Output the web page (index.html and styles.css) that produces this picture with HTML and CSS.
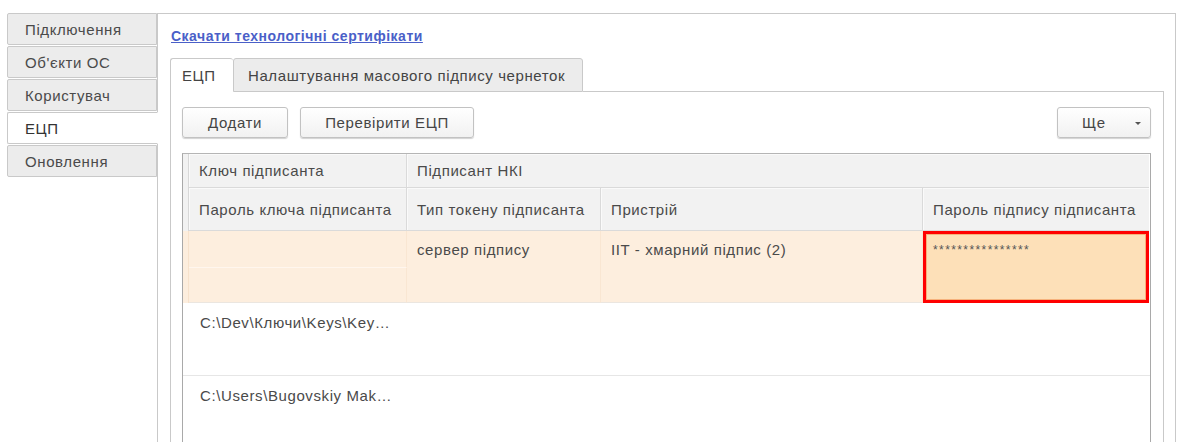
FILE: index.html
```html
<!DOCTYPE html>
<html lang="uk">
<head>
<meta charset="utf-8">
<title>ЕЦП</title>
<link rel="stylesheet" href="styles.css">
</head>
<body>
<div class="app">
  <nav class="sidebar">
    <div class="side-tab">Підключення</div>
    <div class="side-tab">Об'єкти ОС</div>
    <div class="side-tab">Користувач</div>
    <div class="side-tab active">ЕЦП</div>
    <div class="side-tab">Оновлення</div>
  </nav>
  <main class="main">
    <a class="link" href="#">Скачати технологічні сертифікати</a>
    <div class="tabs">
      <div class="tab active">ЕЦП</div>
      <div class="tab">Налаштування масового підпису чернеток</div>
      <div class="tab-fill"></div>
    </div>
    <div class="panel">
      <div class="toolbar">
        <button class="btn btn-add">Додати</button>
        <button class="btn btn-check">Перевірити ЕЦП</button>
        <button class="btn btn-more">Ще <span class="caret"></span></button>
      </div>
      <div class="table">
        <div class="grid">
          <div class="stripe h-stripe"></div>
          <div class="hc c1 r1">Ключ підписанта</div>
          <div class="hc c234 r1">Підписант НКІ</div>
          <div class="hc c1 r2">Пароль ключа підписанта</div>
          <div class="hc c2 r2">Тип токену підписанта</div>
          <div class="hc c3 r2">Пристрій</div>
          <div class="hc c4 r2 last">Пароль підпису підписанта</div>

          <div class="stripe d-stripe"></div>
          <div class="dc c1 r3 sub"></div>
          <div class="dc c1 r4"></div>
          <div class="dc c2 r34">сервер підпису</div>
          <div class="dc c3 r34">IIT - хмарний підпис (2)</div>
          <div class="dc c4 r34 pw"><span class="stars">****************</span></div>
        </div>
        <div class="row">C:\Dev\Ключи\Keys\Key…</div>
        <div class="row">C:\Users\Bugovskiy Mak…</div>
      </div>
    </div>
  </main>
</div>
</body>
</html>
```

FILE: styles.css
```css
html, body {
  margin: 0;
  background: #fff;
}
body {
  font-family: "Liberation Sans", Arial, sans-serif;
  font-size: 15px;
  letter-spacing: 0.6px;
  color: #464646;
  overflow: hidden;
  height: 442px;
}
.app {
  display: flex;
  padding: 13px 0 0 7px;
  height: 442px;
  box-sizing: border-box;
}
.sidebar {
  width: 150px;
  flex: none;
  display: flex;
  flex-direction: column;
  gap: 1px;
}
.side-tab {
  height: 32px;
  box-sizing: border-box;
  border: 1px solid #c9c9c9;
  border-radius: 2px 0 0 2px;
  background: #ececec;
  padding-left: 17px;
  display: flex;
  align-items: center;
  color: #4a4a4a;
}
.side-tab.active {
  background: #fff;
  border-right-color: #fff;
  margin-right: -1px;
  position: relative;
  z-index: 1;
  color: #333;
}
.main {
  flex: none;
  width: 1019px;
  box-sizing: border-box;
  border: 1px solid #c9c9c9;
  border-bottom: none;
  padding: 14px 11px 0 12px;
  display: flex;
  flex-direction: column;
}
.link {
  margin-left: 1px;
  font-size: 14px;
  font-weight: bold;
  letter-spacing: 0.5px;
  color: #4a5fc8;
  text-decoration: underline;
  line-height: 16px;
  align-self: flex-start;
}
.tabs {
  display: flex;
  margin-top: 14px;
  height: 34px;
}
.tab {
  box-sizing: border-box;
  height: 34px;
  border: 1px solid #c9c9c9;
  border-bottom: none;
  border-radius: 3px 3px 0 0;
  background: #ececec;
  display: flex;
  align-items: center;
  padding: 0 14px;
  color: #444;
  white-space: nowrap;
}
.tab.active {
  width: 63px;
  background: #fff;
  padding-left: 11px;
  border-right: none;
}
.tab:not(.active) {
  width: 350px;
  border-bottom: 1px solid #c9c9c9;
}
.tab-fill {
  flex: 1;
  border-bottom: 1px solid #c9c9c9;
}
.panel {
  flex: 1;
  border: 1px solid #c9c9c9;
  border-top: none;
  border-bottom: none;
  padding: 15px 12px 0 11px;
  display: flex;
  flex-direction: column;
}
.toolbar {
  display: flex;
  gap: 12px;
  height: 31px;
}
.btn {
  box-sizing: border-box;
  height: 31px;
  border: 1px solid #c2c2c2;
  border-radius: 3px;
  background: linear-gradient(#ffffff, #f1f1f1);
  box-shadow: 0 1px 1px rgba(0, 0, 0, 0.18);
  font-family: inherit;
  font-size: 15px;
  letter-spacing: 0.6px;
  color: #454545;
  padding: 0;
}
.btn-add { width: 106px; }
.btn-check { width: 174px; }
.btn-more {
  width: 94px;
  margin-left: auto;
  position: relative;
  text-align: left;
  padding-left: 24px;
}
.caret {
  position: absolute;
  right: 9px;
  top: 14px;
  width: 0;
  height: 0;
  border-left: 3px solid transparent;
  border-right: 3px solid transparent;
  border-top: 3px solid #555;
}
.table {
  margin-top: 15px;
  border-left: 1px solid #a9a9a9;
  border-right: 1px solid #a9a9a9;
  border-top: 1px solid #b5b5b5;
  flex: 1;
}
.grid {
  display: grid;
  grid-template-columns: 6px 218px 194px 322px 226px;
  grid-template-rows: 34px 43px 37px 35px;
}
.stripe {
  grid-column: 1;
  border-right: 1px solid #d8d8d8;
}
.h-stripe { grid-row: 1 / 3; background: #f2f2f2; }
.d-stripe { grid-row: 3 / 5; background: #fdeede; border-right-color: #f7e2cc; }
.hc {
  background: #f2f2f2;
  border-right: 1px solid #dadada;
  border-bottom: 1px solid #dadada;
  box-shadow: inset 1px 1px 0 #fafafa;
  padding-left: 10px;
  display: flex;
  align-items: center;
  color: #4a4a4a;
  white-space: nowrap;
}
.hc.last, .c234 { border-right: none; }
.c1 { grid-column: 2; }
.c2 { grid-column: 3; }
.c3 { grid-column: 4; }
.c4 { grid-column: 5; }
.c234 { grid-column: 3 / 6; }
.r1 { grid-row: 1; }
.r2 { grid-row: 2; }
.r3 { grid-row: 3; }
.r4 { grid-row: 4; }
.r34 { grid-row: 3 / 5; }
.dc {
  background: #fdeede;
  border-right: 1px solid #f9e6d2;
  border-bottom: 1px solid #ebe6e0;
  padding: 10px 0 0 10px;
  color: #4a4a4a;
  white-space: nowrap;
}
.dc.sub { border-bottom: 1px solid #fff6ee; }
.dc.pw {
  background: #fde0b8;
  border: 3px solid #ff0000;
  box-shadow: inset 0 0 0 1px #f6b27c;
  padding: 6px 0 0 7px;
}
.stars {
  font-size: 12px;
  letter-spacing: 1.4px;
  color: #555;
}
.row {
  height: 73px;
  box-sizing: border-box;
  border-bottom: 1px solid #e6e6e6;
  padding: 11px 0 0 17px;
  color: #4a4a4a;
}
```
